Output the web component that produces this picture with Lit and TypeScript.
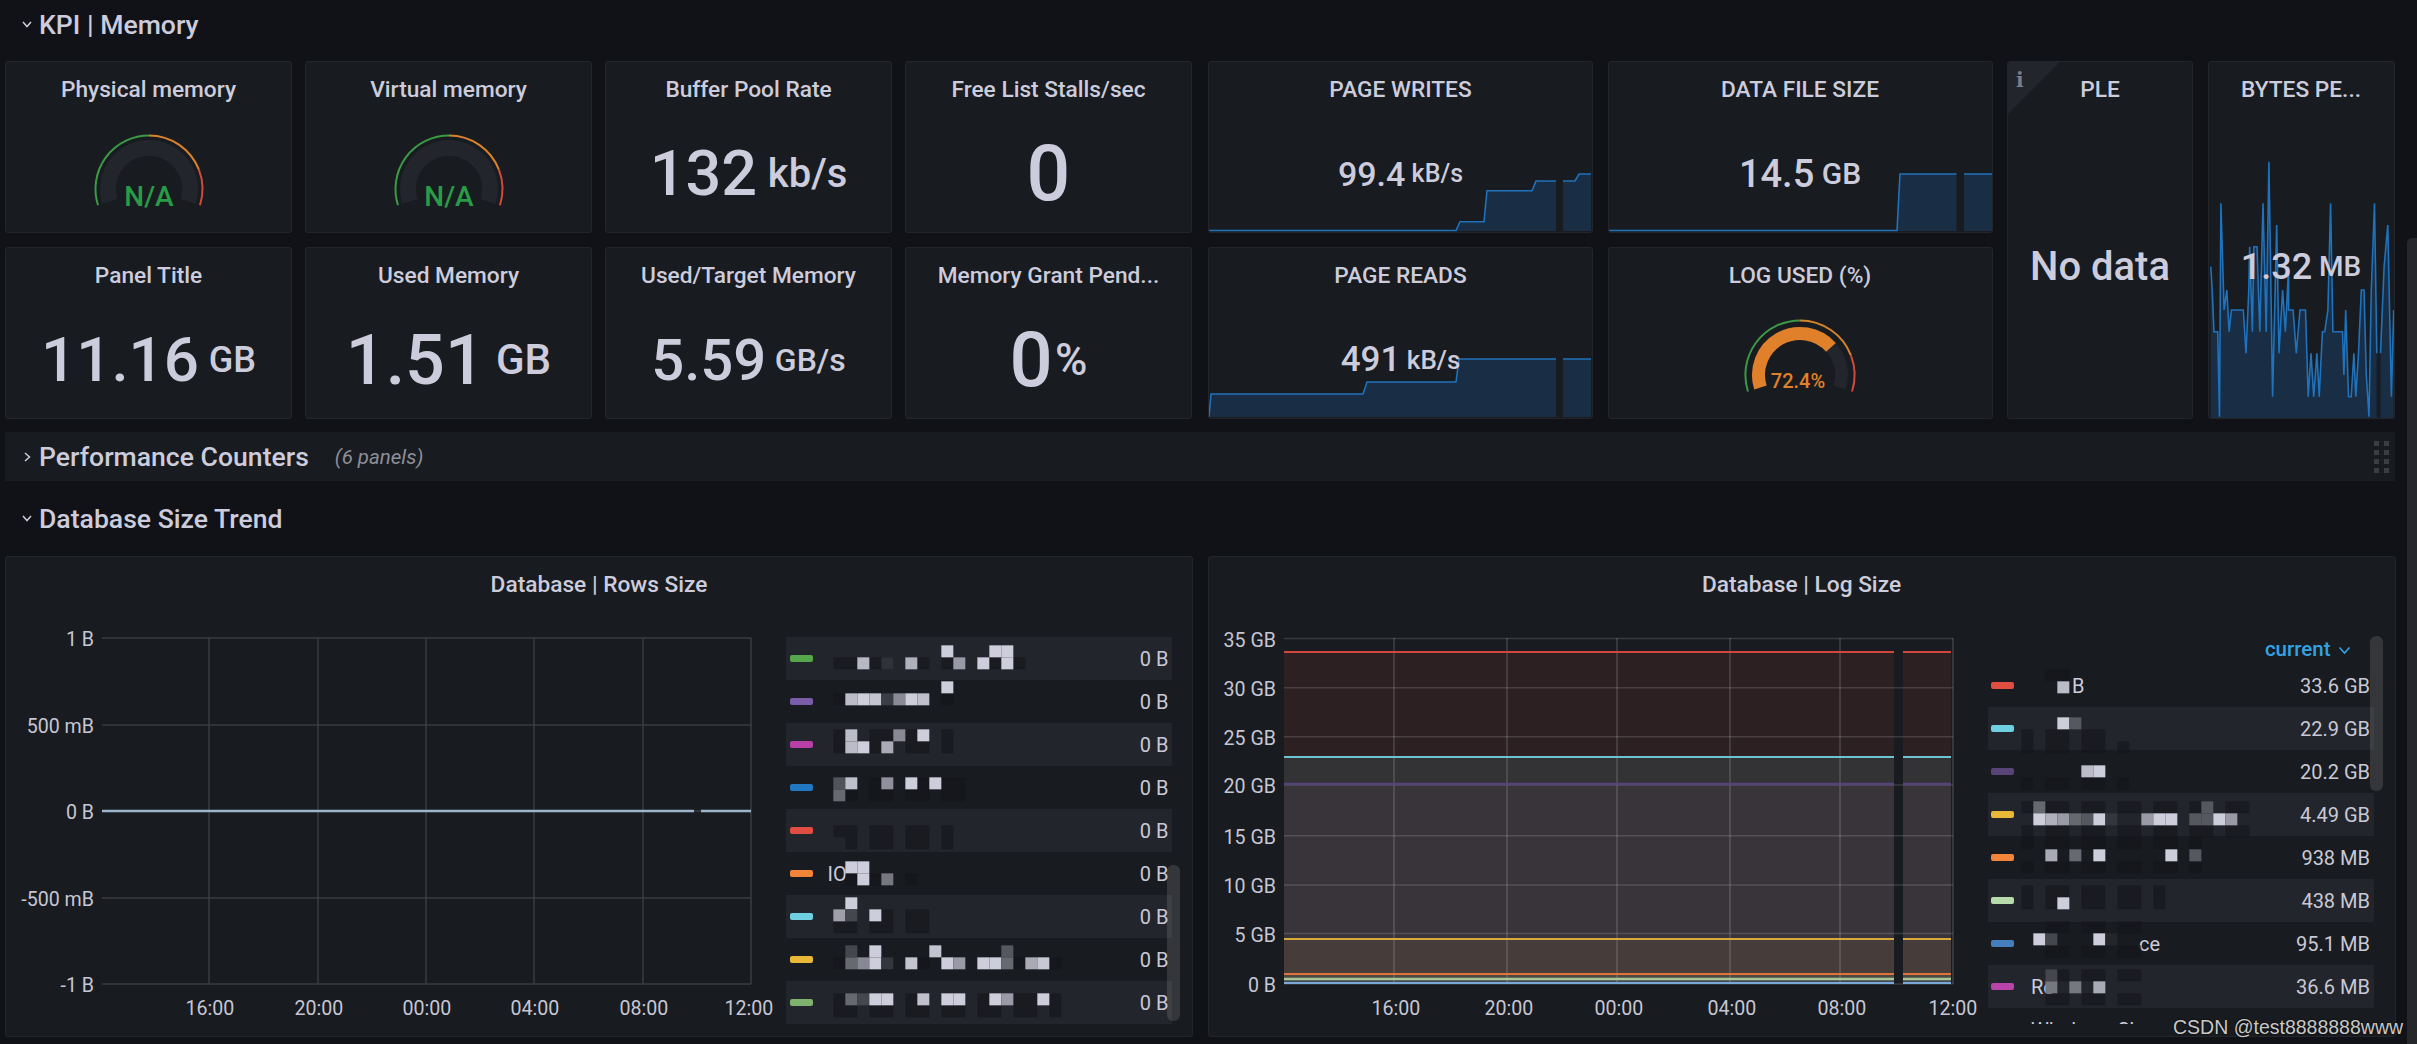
import { LitElement, html, css, svg } from "lit";
import { customElement } from "lit/decorators.js";

type Stat = { title: string; v?: string; u?: string; fs?: number; ufs?: number; gap?: number };

const L = "#cdcddc";
const polar = (cx: number, cy: number, r: number, t: number) => {
  const a = ((197.6 - 215.2 * t) * Math.PI) / 180;
  return [cx + r * Math.cos(a), cy - r * Math.sin(a)];
};
const arc = (cx: number, cy: number, r: number, t0: number, t1: number) => {
  const [x0, y0] = polar(cx, cy, r, t0);
  const [x1, y1] = polar(cx, cy, r, t1);
  const large = (t1 - t0) * 215.2 > 180 ? 1 : 0;
  return `M${x0.toFixed(2)} ${y0.toFixed(2)}A${r} ${r} 0 ${large} 1 ${x1.toFixed(2)} ${y1.toFixed(2)}`;
};

function gauge(text: string, color: string, fs: number, value: number, opts: { tr: number; br: number; bw: number; ty: number; tx: number }) {
  const cx = 60, cy = 60;
  return html`<svg class="gauge" width="120" height="90" viewBox="0 0 120 90">
    <path d=${arc(cx, cy, opts.br, 0, 1)} fill="none" stroke="#22252b" stroke-width=${opts.bw}></path>
    ${value > 0 ? svg`<path d=${arc(cx, cy, opts.br, 0, value)} fill="none" stroke=${color} stroke-width=${opts.bw}></path>` : ""}
    <path d=${arc(cx, cy, opts.tr, 0, 0.5)} fill="none" stroke="#3c9a46" stroke-width="2"></path>
    <path d=${arc(cx, cy, opts.tr, 0.5, 0.82)} fill="none" stroke="#d9822b" stroke-width="2"></path>
    <path d=${arc(cx, cy, opts.tr, 0.82, 1)} fill="none" stroke="#d44a3a" stroke-width="2"></path>
    <text class="gt" x=${opts.tx} y=${opts.ty} fill=${color} font-size=${fs} text-anchor="middle">${text}</text>
  </svg>`;
}

function spark(x0: number, y0: number, w: number, h: number, segs: number[][][], bottom: number) {
  return html`<svg class="spark" width=${w} height=${h} viewBox="${x0} ${y0} ${w} ${h}">
    ${segs.map((s) => {
      const line = s.map((p) => p.join(",")).join(" ");
      const fill = `${s[0][0]},${bottom} ${line} ${s[s.length - 1][0]},${bottom}`;
      return svg`<polygon points=${fill} fill="#192d44"></polygon><polyline points=${line} fill="none" stroke="#1f72bb" stroke-width="1.6"></polyline>`;
    })}
  </svg>`;
}

const writes = [
  [[1208, 230.5], [1456, 230.5], [1460, 221.7], [1484, 221.7], [1487, 190.7], [1532, 190.7], [1536, 181], [1556, 181]],
  [[1563, 181], [1575, 181], [1579, 174], [1591, 174]],
];
const reads = [
  [[1209, 417], [1211, 394], [1363, 394], [1367, 382], [1456, 382], [1459, 359], [1556, 359]],
  [[1563, 359], [1591, 359]],
];
const dataFile = [
  [[1609, 230.5], [1897, 230.5], [1900, 174], [1956.5, 174]],
  [[1964, 174], [1992, 174]],
];
const bz = [1115,800,1118,870,1122,995,1130,995,1134,1250,1137,610,1144,930,1150,870,1155,995,1160,930,1186,930,1192,1060,1198,870,1200,740,1206,995,1209,740,1216,740,1222,995,1229,610,1236,995,1242,485,1250,1190,1259,675,1264,1060,1272,870,1278,995,1285,800,1285,930,1295,930,1302,1060,1310,930,1322,930,1328,1190,1334,1060,1340,1190,1347,1060,1352,1190,1359,995,1364,995,1371,930,1377,610,1382,995,1403,995,1406,1125,1410,930,1416,1190,1422,1190,1428,1060,1432,1190,1438,1060,1444,870,1450,870,1455,1125,1461,1250,1466,870,1473,610,1478,1060];
const bz2 = [1486,1060,1494,800,1502,675,1510,1190,1515,930];
const toPts = (a: number[]) => {
  const r: number[][] = [];
  for (let i = 0; i < a.length; i += 2) r.push([+(1700 + a[i] / 2.187).toFixed(1), +(a[i + 1] / 3).toFixed(1)]);
  return r;
};

const leftRows = [
  { c: "#56a64b", name: "", v: "0 B", pad: 0 },
  { c: "#7a5ca8", name: "", v: "0 B", pad: 0 },
  { c: "#b83fa5", name: "", v: "0 B", pad: 0 },
  { c: "#1f78c1", name: "", v: "0 B", pad: 0 },
  { c: "#e24d42", name: "", v: "0 B", pad: 0 },
  { c: "#f2853a", name: "IO", v: "0 B", pad: -2 },
  { c: "#6ed0e0", name: "", v: "0 B", pad: 0 },
  { c: "#eab839", name: "", v: "0 B", pad: 0 },
  { c: "#7eb26d", name: "", v: "0 B", pad: 0 },
];
const rightRows = [
  { c: "#e24d42", name: "B", v: "33.6 GB", pad: 41 },
  { c: "#6ed0e0", name: "", v: "22.9 GB", pad: 0 },
  { c: "#584477", name: "", v: "20.2 GB", pad: 0 },
  { c: "#eab839", name: "", v: "4.49 GB", pad: 0 },
  { c: "#f2853a", name: "", v: "938 MB", pad: 0 },
  { c: "#b7dbab", name: "", v: "438 MB", pad: 0 },
  { c: "#447ebc", name: "ce", v: "95.1 MB", pad: 108 },
  { c: "#ba43a9", name: "Re", v: "36.6 MB", pad: 0 },
  { c: "#0a437c", name: "Windows Sho", v: "", pad: 0 },
];

type Cell = [number, number, string];
const leftCells: Cell[] = [
  [10,0,L],[14,0,L],[15,0,L],
  [3,1,"#b8b8c4"],[5,1,"#2f3238"],[7,1,"#b0b0bc"],[11,1,"#9a9aa6"],[13,1,L],[15,1,L],
  [10,3,L],
  [2,4,"#bcbcc8"],[3,4,L],[4,4,"#c4c4d0"],[5,4,"#3a3d44"],[6,4,"#8a8a96"],[7,4,L],[8,4,"#c0c0cc"],
  [2,7,"#bcbcc8"],[6,7,"#888894"],[8,7,L],
  [2,8,"#bcbcc8"],[3,8,L],[5,8,"#aaaab6"],
  [1,11,"#50535a"],[2,11,"#c0c0cc"],[5,11,"#90909c"],[7,11,L],[9,11,L],
  [1,12,"#666970"],
  [2,18,L],[3,18,L],[3,19,L],[5,19,"#777780"],
  [2,21,L],[1,22,"#a0a0ac"],[2,22,"#44474e"],[4,22,L],
  [2,25,"#44474e"],[4,25,L],[9,25,"#c4c4d0"],[15,25,"#55585f"],
  [2,26,"#666970"],[3,26,"#888894"],[4,26,L],[5,26,"#33363c"],[7,26,"#c4c4d0"],[10,26,L],[11,26,"#9a9aa6"],[13,26,L],[14,26,L],[15,26,"#666970"],[17,26,"#aaaab6"],[18,26,"#c8c8d4"],
  [2,29,"#666970"],[3,29,"#44474e"],[4,29,L],[5,29,L],[8,29,"#c0c0cc"],[10,29,L],[11,29,L],[14,29,L],[15,29,"#999aa6"],[18,29,L],
];
const leftDark: number[][] = [
  [0,1,0,16],[0,4,0,10],[0,7,0,10],[0,8,0,10],[0,11,0,11],[0,12,0,11],[0,15,0,10],[2,16,0,10],[2,19,0,7],[0,22,0,8],[0,23,0,8],[0,26,0,19],[0,29,0,19],[0,30,0,19],
];
const rightCells: Cell[] = [
  [2,0,"#bcbcc8"],
  [2,3,L],[3,3,"#55585f"],
  [4,7,"#bcbcc8"],[5,7,L],
  [0,10,"#666970"],[14,10,"#55585f"],
  [0,11,L],[1,11,"#b0b0bc"],[2,11,"#9a9aa6"],[3,11,"#666970"],[4,11,"#55585f"],[5,11,L],[6,11,"#33363c"],[9,11,"#9a9aa6"],[10,11,L],[11,11,L],[13,11,"#55585f"],[14,11,"#55585f"],[15,11,L],[16,11,"#9a9aa6"],
  [1,14,"#aaaab6"],[3,14,"#666970"],[5,14,L],[11,14,L],[13,14,"#55585f"],
  [2,18,L],
  [0,21,L],[1,21,"#44474e"],[5,21,L],[6,21,"#24262b"],
  [1,24,"#44474e"],
  [1,25,"#777780"],[3,25,"#777780"],[5,25,"#aaaab6"],
];
const rightDark: number[][] = [
  [0,-1,0,3],[-1,4,0,6],[-1,5,0,7],[-1,8,0,7],[-1,10,0,18],[-1,12,0,18],[-1,13,0,13],[-1,15,0,13],[-1,17,0,10],[-1,18,0,10],[0,20,0,9],[0,22,0,9],[0,24,0,8],[0,26,0,8],
];

function mosaic() {
  const rects: unknown[] = [];
  const add = (ox: number, oy: number, cells: Cell[], dark: number[][]) => {
    for (const [i0, j, , i1] of dark) {
      for (let i = i0; i <= i1; i++) {
        if ((i * 5 + j * 3) % 3 !== 0)
          rects.push(svg`<rect x=${ox + 12 * i} y=${oy + 12 * j} width="12" height="12" fill="#14161a" fill-opacity=".6"></rect>`);
      }
    }
    for (const [i, j, c] of cells)
      rects.push(svg`<rect x=${ox + 12 * i} y=${oy + 12 * j} width="12" height="12" fill=${c}></rect>`);
  };
  add(821.33, 645.33, leftCells, leftDark);
  add(2033.33, 681.33, rightCells, rightDark);
  return html`<svg class="mosaic" width="2417" height="1044" viewBox="0 0 2417 1044">${rects}</svg>`;
}

const leftX = [209, 318, 426, 534, 643, 751];
const leftY: [number, string][] = [[639, "1 B"], [726, "500 mB"], [812, "0 B"], [899, "-500 mB"], [985, "-1 B"]];
const rightX = [1394, 1507, 1617, 1730, 1840, 1953];
const rightY: [number, string][] = [[639.5, "35 GB"], [688.7, "30 GB"], [737.7, "25 GB"], [786, "20 GB"], [836.7, "15 GB"], [886, "10 GB"], [934.5, "5 GB"], [985, "0 B"]];
const times = ["16:00", "20:00", "00:00", "04:00", "08:00", "12:00"];

function leftChart() {
  return html`<svg class="chart" width="780" height="424" viewBox="6 613 780 424">
    ${leftY.map(([y, t]) => svg`<line x1="102" x2="751" y1=${y} y2=${y} stroke="#3a3d41" stroke-width="1.5"></line>
      <text class="ax" x="94" y=${y + 8} text-anchor="end">${t}</text>`)}
    ${leftX.map((x, i) => svg`<line x1=${x} x2=${x} y1="639" y2="985" stroke="#3a3d41" stroke-width="1.5"></line>
      <text class="ax" x=${i === 5 ? 749 : x + 1} y="1016" text-anchor="middle">${times[i]}</text>`)}
    <line x1="102" x2="694" y1="812" y2="812" stroke="#9db5cc" stroke-width="2.4"></line>
    <line x1="701" x2="751" y1="812" y2="812" stroke="#9db5cc" stroke-width="2.4"></line>
  </svg>`;
}

function rightChart() {
  const bands: [number, number, string][] = [
    [653, 758, "#2c2023"], [758, 785, "#333336"], [785, 940, "#38343a"], [940, 975, "#463d3a"], [975, 980, "#4d4a40"], [980, 985, "#3f4a50"],
  ];
  const lines: [number, string, number][] = [
    [653, "#d2473d", 2], [758, "#6ec3d3", 2], [785, "#55437a", 2.5], [940, "#d9a93a", 2], [975, "#e0733a", 2], [980, "#a9c596", 2.5], [984, "#7aa9d8", 2],
  ];
  const spans = [[1284, 1894], [1903, 1951]];
  return html`<svg class="chart" width="779" height="424" viewBox="1209 613 779 424">
    ${spans.map(([a, b]) => bands.map(([y0, y1, c]) => svg`<rect x=${a} y=${y0} width=${b - a} height=${y1 - y0} fill=${c}></rect>`))}
    ${rightY.map(([y, t]) => svg`<line x1="1284" x2="1953" y1=${y} y2=${y} stroke="rgba(255,255,255,.14)" stroke-width="1.5"></line>
      <text class="ax" x="1276" y=${y + 8} text-anchor="end">${t}</text>`)}
    ${rightX.map((x, i) => svg`<line x1=${x} x2=${x} y1="639" y2="985" stroke="rgba(255,255,255,.17)" stroke-width="1.5"></line>
      <text class="ax" x=${i === 5 ? 1953 : x + 2} y="1016" text-anchor="middle">${times[i]}</text>`)}
    ${spans.map(([a, b]) => lines.map(([y, c, w]) => svg`<line x1=${a} x2=${b} y1=${y} y2=${y} stroke=${c} stroke-width=${w}></line>`))}
  </svg>`;
}

const chev = (dir: "down" | "right") => html`<svg class="chev" width="12" height="12" viewBox="0 0 12 12">
  <polyline points=${dir === "down" ? "2,4 6,8.5 10,4" : "4,2 8.5,6 4,10"} fill="none" stroke="#ccccdc" stroke-width="1.5"></polyline>
</svg>`;

@customElement("app-root")
export class AppRoot extends LitElement {
  static styles = css`
    :host {
      display: block;
      position: relative;
      width: 2417px;
      height: 1044px;
      overflow: hidden;
      background: #111217;
      color: #ccccdc;
      font-family: Roboto, "Liberation Sans", sans-serif;
    }
    * { box-sizing: border-box; }
    .page { padding-left: 5px; width: 2395px; }
    .row-title {
      height: 48px;
      display: flex;
      align-items: center;
      padding-left: 16px;
      gap: 6px;
      font-size: 26.6px;
      font-weight: 500;
      white-space: nowrap;
    }
    .chev { flex: none; }
    .kpi { margin-top: 13px; display: flex; gap: 16px; height: 358px; }
    .g4 {
      display: grid;
      grid-template-columns: repeat(4, 287px);
      grid-template-rows: 172px 172px;
      column-gap: 13px;
      row-gap: 14px;
      width: 1187px;
    }
    .g4r {
      display: grid;
      grid-template-columns: 385px 385px 186px 187px;
      grid-template-rows: 172px 172px;
      column-gap: 14.5px;
      row-gap: 14px;
    }
    .span2 { grid-row: span 2; }
    .panel {
      position: relative;
      background: #181b1f;
      border: 1px solid #22252a;
      border-radius: 3px;
      display: flex;
      flex-direction: column;
      overflow: hidden;
    }
    .ptitle {
      position: relative;
      height: 55px;
      flex: none;
      display: flex;
      align-items: center;
      justify-content: center;
      font-size: 22.7px;
      font-weight: 500;
      white-space: nowrap;
      padding-bottom: 1px;
    }
    .pbody {
      position: relative;
      flex: 1;
      display: flex;
      align-items: center;
      justify-content: center;
      padding-bottom: 2px;
      font-weight: 500;
      white-space: nowrap;
    }
    .pbody.g { align-items: flex-start; padding: 12px 0 0; }
    .spark { position: absolute; left: 0; top: 0; }
    .gauge { display: block; }
    .gt { font-family: Roboto, sans-serif; font-weight: 500; }
    .unit { display: inline-block; }
    .ix {
      position: absolute;
      left: 0;
      top: 0;
      width: 52px;
      height: 52px;
      background: #22252b;
      clip-path: polygon(0 0, 100% 0, 0 100%);
    }
    .ig {
      position: absolute;
      left: 8px;
      top: 6px;
      font-family: "DejaVu Serif", serif;
      font-weight: 700;
      font-size: 20px;
      line-height: 24px;
      color: #7b7f88;
    }
    .bar {
      margin-top: 13px;
      height: 49px;
      background: #181b1f;
      display: flex;
      align-items: center;
      padding-left: 16px;
      gap: 6px;
      font-size: 26.6px;
      font-weight: 500;
      white-space: nowrap;
    }
    .sub {
      margin-left: 20px;
      font-size: 20.5px;
      font-weight: 400;
      font-style: italic;
      color: #8e8e9b;
    }
    .handle {
      margin-left: auto;
      margin-right: 6px;
      display: grid;
      grid-template-columns: 5px 5px;
      grid-auto-rows: 5px;
      column-gap: 5px;
      row-gap: 4px;
    }
    .handle i { background: #3b3d40; display: block; }
    .sec2 { margin-top: 13px; }
    .charts {
      margin-top: 14px;
      display: flex;
      gap: 14.5px;
      height: 481px;
      width: 2391px;
    }
    .cpanel { width: 1188px; flex: none; }
    .cbody { flex: 1; display: flex; position: relative; }
    .chart { display: block; flex: none; }
    .ax { font-family: Roboto, sans-serif; font-size: 19.6px; fill: #c6c6d4; }
    .lg { position: relative; width: 386px; flex: none; }
    .lg-clip { overflow: hidden; }
    .lg-clip.l { height: 412px; padding-top: 25px; }
    .lg-clip.r { height: 360px; }
    .lhead {
      height: 52px;
      display: flex;
      justify-content: flex-end;
      align-items: flex-end;
      gap: 7px;
      padding-right: 23px;
      color: #33a2e5;
      font-size: 20.5px;
      font-weight: 500;
      line-height: 30px;
    }
    .lhead svg { margin-bottom: 9px; }
    .lrow {
      height: 43px;
      display: flex;
      align-items: center;
      padding: 0 3.5px;
      font-size: 20px;
      white-space: nowrap;
    }
    .lg-clip.l .lrow:nth-child(odd) { background: #22252b; }
    .lg-clip.r .lrow:nth-child(even) { background: #22252b; }
    .sw { width: 23px; height: 7.5px; border-radius: 2px; flex: none; }
    .nm { color: #ccccdc; }
    .val { margin-left: auto; color: #c9c9d6; }
    .sb { position: absolute; width: 13px; border-radius: 6px; background: rgba(255, 255, 255, 0.12); }
    .sb.l { left: 381px; top: 253px; height: 156px; }
    .sb.r { left: 382px; top: 24px; height: 155px; }
    .mosaic { position: absolute; left: 0; top: 0; pointer-events: none; }
    .scroll {
      position: absolute;
      left: 2407px;
      top: 238px;
      width: 10px;
      bottom: 0;
      background: #25272b;
      border-radius: 5px 0 0 0;
    }
    .mark {
      position: absolute;
      left: 2173px;
      top: 1014px;
      font-family: "Liberation Sans", sans-serif;
      font-size: 19.5px;
      line-height: 26px;
      color: #c8c8c8;
      white-space: nowrap;
      text-shadow: 0 0 2px #000;
    }
  `;

  private stat(s: Stat) {
    const gap = s.gap ?? 0.27;
    return html`<div class="panel">
      <div class="ptitle">${s.title}</div>
      <div class="pbody" style="font-size:${s.fs}px">
        <span>${s.v}</span>${s.u ? html`<span class="unit" style="font-size:${s.ufs}px;margin-left:${gap}em">${s.u}</span>` : ""}
      </div>
    </div>`;
  }

  private sparkPanel(title: string, v: string, u: string, fs: number, ufs: number, x0: number, y0: number, w: number, segs: number[][][], bottom: number) {
    return html`<div class="panel">
      ${spark(x0, y0, w, 170, segs, bottom)}
      <div class="ptitle">${title}</div>
      <div class="pbody" style="font-size:${fs}px">
        <span>${v}</span><span class="unit" style="font-size:${ufs}px;margin-left:.25em">${u}</span>
      </div>
    </div>`;
  }

  private gaugePanel(title: string, content: unknown) {
    return html`<div class="panel"><div class="ptitle">${title}</div><div class="pbody g">${content}</div></div>`;
  }

  render() {
    const na = { tr: 53.5, br: 41, bw: 16, ty: 77, tx: 60 };
    return html`
      <div class="page">
        <div class="row-title">${chev("down")}<span>KPI | Memory</span></div>
        <div class="kpi">
          <div class="g4">
            ${this.gaugePanel("Physical memory", gauge("N/A", "#299c46", 28, 0, na))}
            ${this.gaugePanel("Virtual memory", gauge("N/A", "#299c46", 28, 0, na))}
            ${this.stat({ title: "Buffer Pool Rate", v: "132", u: "kb/s", fs: 63, ufs: 40 })}
            ${this.stat({ title: "Free List Stalls/sec", v: "0", fs: 77 })}
            ${this.stat({ title: "Panel Title", v: "11.16", u: "GB", fs: 62, ufs: 36 })}
            ${this.stat({ title: "Used Memory", v: "1.51", u: "GB", fs: 70, ufs: 42 })}
            ${this.stat({ title: "Used/Target Memory", v: "5.59", u: "GB/s", fs: 58, ufs: 32 })}
            ${this.stat({ title: "Memory Grant Pend...", v: "0", u: "%", fs: 76, ufs: 44, gap: 0.05 })}
          </div>
          <div class="g4r">
            ${this.sparkPanel("PAGE WRITES", "99.4", "kB/s", 34, 25, 1209, 62, 385, writes, 231)}
            ${this.sparkPanel("DATA FILE SIZE", "14.5", "GB", 38, 30, 1609, 62, 385, dataFile, 231)}
            <div class="panel span2">
              <div class="ix"></div><div class="ig">i</div>
              <div class="ptitle">PLE</div>
              <div class="pbody" style="font-size:40px">No data</div>
            </div>
            <div class="panel span2">
              ${spark(2208, 62, 187, 356, [toPts(bz), toPts(bz2)], 418)}
              <div class="ptitle">BYTES PE...</div>
              <div class="pbody" style="font-size:36px">
                <span>1.32</span><span class="unit" style="font-size:28px;margin-left:.25em">MB</span>
              </div>
            </div>
            ${this.sparkPanel("PAGE READS", "491", "kB/s", 35, 26, 1209, 248, 385, reads, 417)}
            ${this.gaugePanel("LOG USED (%)", gauge("72.4%", "#e0802b", 20, 0.724, { tr: 54.6, br: 41.5, bw: 13, ty: 73, tx: 58 }))}
          </div>
        </div>
        <div class="bar">
          ${chev("right")}<span>Performance Counters</span><span class="sub">(6 panels)</span>
          <div class="handle">${[0, 1, 2, 3, 4, 5, 6, 7].map(() => html`<i></i>`)}</div>
        </div>
        <div class="row-title sec2">${chev("down")}<span>Database Size Trend</span></div>
        <div class="charts">
          <div class="panel cpanel">
            <div class="ptitle">Database | Rows Size</div>
            <div class="cbody">
              ${leftChart()}
              <div class="lg">
                <div class="lg-clip l">${leftRows.map((r) => this.legendRow(r))}</div>
                <div class="sb l"></div>
              </div>
            </div>
          </div>
          <div class="panel cpanel">
            <div class="ptitle">Database | Log Size</div>
            <div class="cbody">
              ${rightChart()}
              <div class="lg">
                <div class="lhead"><span>current</span>
                  <svg width="13" height="9" viewBox="0 0 13 9"><polyline points="1.5,1.5 6.5,7 11.5,1.5" fill="none" stroke="#33a2e5" stroke-width="1.6"></polyline></svg>
                </div>
                <div class="lg-clip r">${rightRows.map((r) => this.legendRow(r))}</div>
                <div class="sb r"></div>
              </div>
            </div>
          </div>
        </div>
      </div>
      ${mosaic()}
      <div class="scroll"></div>
      <div class="mark">CSDN @test8888888www</div>
    `;
  }

  private legendRow(r: { c: string; name: string; v: string; pad: number }) {
    return html`<div class="lrow">
      <span class="sw" style="background:${r.c}"></span>
      <span class="nm" style="margin-left:${17 + r.pad}px">${r.name}</span>
      <span class="val">${r.v}</span>
    </div>`;
  }
}
